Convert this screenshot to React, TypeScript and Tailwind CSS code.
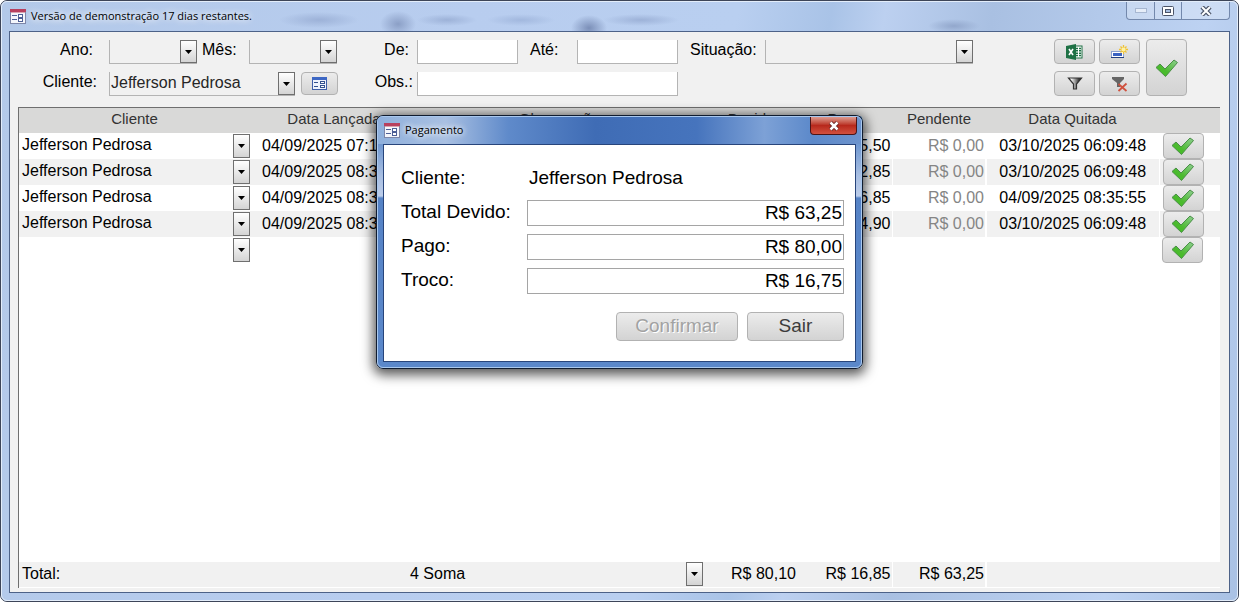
import React, { useState } from 'react';

const rows = [
  { client: 'Jefferson Pedrosa', date: '04/09/2025 07:15:22', amount: 'R$ 45,50', pending: 'R$ 0,00', settled: '03/10/2025 06:09:48' },
  { client: 'Jefferson Pedrosa', date: '04/09/2025 08:31:10', amount: 'R$ 12,85', pending: 'R$ 0,00', settled: '03/10/2025 06:09:48' },
  { client: 'Jefferson Pedrosa', date: '04/09/2025 08:35:02', amount: 'R$ 16,85', pending: 'R$ 0,00', settled: '04/09/2025 08:35:55' },
  { client: 'Jefferson Pedrosa', date: '04/09/2025 08:36:40', amount: 'R$ 4,90', pending: 'R$ 0,00', settled: '03/10/2025 06:09:48' },
];

const buttonStyle = 'flex items-center justify-center rounded-[4px] border border-[#b2b2b2] bg-linear-to-b from-[#ececec] to-[#d3d3d3]';

function FormIcon() {
  return (
    <svg width="16" height="15" viewBox="0 0 16 15" shapeRendering="crispEdges" aria-hidden="true">
      <rect x="0.5" y="0.5" width="15" height="14" fill="#f4f6fb" stroke="#7d86a8" />
      <rect width="16" height="3" fill="#b8405e" />
      <rect x="1" y="3" width="14" height="1" fill="#d9a3b0" />
      <path d="M2 6.5h5M2 10.5h5" stroke="#4d5f96" />
      <rect x="8.5" y="5.5" width="4" height="3" fill="#fff" stroke="#4d5f96" />
      <rect x="8.5" y="9.5" width="4" height="3" fill="#fff" stroke="#4d5f96" />
    </svg>
  );
}

function BlueFormIcon() {
  return (
    <svg width="15" height="13" viewBox="0 0 15 13" shapeRendering="crispEdges" aria-hidden="true">
      <rect x="0.5" y="0.5" width="14" height="12" fill="#eef3fd" stroke="#3f5fa8" />
      <rect width="15" height="3" fill="#3d67c4" />
      <path d="M2 5.5h4M2 9.5h4" stroke="#34528f" />
      <rect x="8.5" y="4.5" width="4" height="2" fill="#fff" stroke="#34528f" />
      <rect x="8.5" y="8.5" width="4" height="2" fill="#fff" stroke="#34528f" />
    </svg>
  );
}

function CheckIcon() {
  return (
    <svg width="24" height="20" viewBox="0 0 24 20" aria-hidden="true">
      <defs>
        <linearGradient id="check" x1="0" y1="1" x2="1" y2="0">
          <stop offset="0" stopColor="#3fc01f" />
          <stop offset="0.4" stopColor="#4cba2f" />
          <stop offset="1" stopColor="#8fcf92" />
        </linearGradient>
      </defs>
      <path d="M1 9.5 5 6l5 5L19 2l3.500 2.500L10.500 18.500Z" fill="url(#check)" stroke="#4a8f47" strokeLinejoin="round" />
    </svg>
  );
}

function ExcelIcon() {
  return (
    <svg width="17" height="16" viewBox="0 0 17 16" aria-hidden="true">
      <rect x="9" y="2" width="7" height="12" fill="#fff" stroke="#1e7145" />
      <path d="M10 4.5h2M13 4.5h2M10 6.8h2M13 6.8h2M10 9.2h2M13 9.2h2M10 11.5h2M13 11.5h2" stroke="#1e7145" strokeWidth="1.4" />
      <path d="M0 2 10 0v16L0 14Z" fill="#1e7145" />
      <path d="m3 5 4 6M7 5l-4 6" stroke="#fff" strokeWidth="1.6" />
    </svg>
  );
}

function NewRecordIcon() {
  return (
    <svg width="17" height="14" viewBox="0 0 17 14" aria-hidden="true">
      <rect x="0.5" y="6.5" width="12" height="6" fill="#fff" stroke="#8ba0cf" />
      <rect x="2" y="8" width="9" height="3" fill="#3b62c2" />
      <path d="M0 12.5h13" stroke="#24407f" />
      <path d="M12.5 0v9M8 4.5h9M9.5 1.5l6 6M15.5 1.5l-6 6" stroke="#f0c233" strokeWidth="1.3" />
      <circle cx="12.5" cy="4.5" r="2" fill="#fff3a3" />
    </svg>
  );
}

function FilterIcon() {
  return (
    <svg width="16" height="13" viewBox="0 0 16 13" aria-hidden="true">
      <defs>
        <linearGradient id="funnel">
          <stop offset="0.2" stopColor="#fff" />
          <stop offset="0.8" stopColor="#3a3a3a" />
        </linearGradient>
      </defs>
      <path d="M1.5 1h13L9.5 7v5h-3V7Z" fill="url(#funnel)" stroke="#333" strokeWidth="1.2" />
    </svg>
  );
}

function ClearFilterIcon() {
  return (
    <svg width="16" height="16" viewBox="0 0 16 16" aria-hidden="true">
      <path d="M0 1h12v2L8 7v4H5V7L0 3Z" fill="#666" />
      <path d="m6.5 8 8 7M14.5 7.5l-8 7.5" stroke="#d0523f" strokeWidth="1.8" />
    </svg>
  );
}

function Arrow({ className }: { className: string }) {
  return (
    <span className={`pointer-events-none col-start-1 row-start-1 flex w-[17px] items-center justify-center justify-self-end border border-[#6f6f6f] bg-linear-to-b from-white to-[#d4d4d4] ${className}`}>
      <svg width="7" height="4" viewBox="0 0 7 4" aria-hidden="true">
        <path d="M0 0h7L3.5 4Z" fill="#000" />
      </svg>
    </span>
  );
}

function Combo({ id, className, options = [] }: { id: string; className: string; options?: string[] }) {
  return (
    <div className={`grid h-6 shrink-0 border-b border-l border-[#b4b4b4] ${className}`}>
      <select id={id} className="col-start-1 row-start-1 w-full appearance-none bg-transparent pb-0.5 pl-px text-[#262626] outline-none">
        {options.map((o) => (
          <option key={o}>{o}</option>
        ))}
      </select>
      <Arrow className="h-[23px]" />
    </div>
  );
}

function TextField({ id, className }: { id: string; className: string }) {
  return <input id={id} type="text" className={`h-6 shrink-0 border-x border-b border-[#b4b4b4] bg-white px-1 outline-none ${className}`} />;
}

function Columns() {
  return (
    <colgroup>
      <col className="w-[231px]" />
      <col className="w-[160px]" />
      <col />
      <col className="w-[94px]" />
      <col className="w-[94px]" />
      <col className="w-[94px]" />
      <col className="w-[173px]" />
      <col className="w-[61px]" />
    </colgroup>
  );
}

function PaymentDialog({ onClose }: { onClose: () => void }) {
  const fields = [
    { id: 'total', label: 'Total Devido:', value: 'R$ 63,25' },
    { id: 'pago', label: 'Pago:', value: 'R$ 80,00' },
    { id: 'troco', label: 'Troco:', value: 'R$ 16,75' },
  ];

  return (
    <div
      role="dialog"
      aria-label="Pagamento"
      className="absolute inset-x-0 top-[114px] mx-auto w-[487px] rounded-[7px] border border-[#101c30] bg-[linear-gradient(180deg,#7b9fd4_0px,#6f97d0_28px,#a9bfe2_60px,#bccdea_80px,#5683c6_82px,#5b88ca_100%)] shadow-[0_3px_12px_3px_rgba(0,0,0,0.65)]"
    >
      <div className="rounded-[6px] border border-[#a9c8ee] px-[5px] pb-[5px]">
        <div className="-mx-[5px] flex h-[27px] items-start justify-between rounded-t-[5px] bg-[linear-gradient(90deg,#8fb0dc_0%,#a9c0e2_14%,#5f8aca_27%,#3f6cb5_45%,#4674bd_66%,#7da1d6_80%,#5c89ca_90%,#6d93cc_100%)] pl-1.5 pr-1">
          <div className="flex items-center gap-[5px] pt-[5px]">
            <FormIcon />
            <h2 className="font-['Open_Sans',sans-serif] text-[11px] leading-4 text-black [text-shadow:0_0_6px_white,0_0_6px_white]">Pagamento</h2>
          </div>
          <button
            type="button"
            aria-label="Fechar"
            onClick={onClose}
            className="flex h-[18px] w-[47px] items-center justify-center rounded-b-[4px] border border-t-0 border-[#4b1416] bg-linear-to-b from-[#dc9a90] via-[#b7281c] via-50% to-[#d2503e]"
          >
            <svg width="12" height="10" viewBox="0 0 12 10" aria-hidden="true">
              <path d="m2.5 1.5 7 7M9.5 1.5l-7 7" stroke="#5b2020" strokeWidth="4" />
              <path d="m2.5 1.5 7 7M9.5 1.5l-7 7" stroke="#fff" strokeWidth="2.5" />
            </svg>
          </button>
        </div>
        <form className="border border-[#28457b] bg-white pb-5 pl-[17px] pr-[11px] pt-[21px] text-[19px] text-black" onSubmit={(e) => e.preventDefault()}>
          <div className="flex flex-col gap-2">
            <div className="flex h-[26px] items-start leading-6">
              <span className="w-[126px]">Cliente:</span>
              <span className="pl-0.5">Jefferson Pedrosa</span>
            </div>
            {fields.map((f) => (
              <div key={f.id} className="flex h-[26px] items-start">
                <label htmlFor={f.id} className="w-[126px] shrink-0 leading-6">{f.label}</label>
                <input id={f.id} type="text" defaultValue={f.value} className="h-[26px] min-w-0 flex-1 border border-[#a5a5a5] bg-white px-px text-right outline-none" />
              </div>
            ))}
          </div>
          <div className="mt-[18px] flex justify-end gap-[9px]">
            <button type="button" disabled className={`h-[29px] w-[122px] text-[#a2a2a2] [text-shadow:1px_1px_0_white] ${buttonStyle}`}>Confirmar</button>
            <button type="button" onClick={onClose} className={`h-[29px] w-[97px] text-[#3c3c3c] ${buttonStyle}`}>Sair</button>
          </div>
        </form>
      </div>
    </div>
  );
}

export default function App() {
  const [isOpen, setIsOpen] = useState(true);

  return (
    <div className="relative flex min-h-screen flex-col rounded-[7px] border border-[#3d4558] bg-[linear-gradient(100deg,#b3c9e9_0%,#b8cdef_35%,#b9cff0_55%,#a9c3e7_62%,#bcd0f0_66%,#a9c0e2_74%,#bdd2f2_90%,#a9c1e4_100%)] font-['Liberation_Sans',Arial,sans-serif] text-[16px] text-black">
      <div className="flex flex-1 flex-col rounded-[6px] border border-[#e3edfa] px-[7px] pb-[7px]">
        <header className="flex h-[29px] items-start justify-between bg-[radial-gradient(ellipse_40px_8px_at_310px_18px,#9db2d8_0%,transparent_100%),radial-gradient(ellipse_18px_13px_at_389px_22px,#8b9fc6_0%,transparent_100%),radial-gradient(ellipse_30px_6px_at_438px_18px,#9db2d8_0%,transparent_100%),radial-gradient(ellipse_34px_6px_at_512px_18px,#a2b8de_0%,transparent_100%),radial-gradient(ellipse_18px_13px_at_580px_26px,#7b8fb8_0%,transparent_100%),radial-gradient(ellipse_38px_6px_at_632px_18px,#9db2d8_0%,transparent_100%),radial-gradient(ellipse_26px_7px_at_945px_24px,#92a7cc_0%,transparent_100%)] pl-px">
          <div className="flex items-center gap-[5px] pt-1.5">
            <FormIcon />
            <h1 className="font-['Open_Sans',sans-serif] text-[11px] leading-4 [text-shadow:0_0_6px_white,0_0_8px_white]">Versão de demonstração 17 dias restantes.</h1>
          </div>
          <div className="flex h-[18px] overflow-hidden rounded-b-[4px] border border-t-0 border-[#7388ac] bg-white/25">
            <button type="button" aria-label="Minimizar" className="flex w-7 items-center justify-center border-r border-[#7388ac]">
              <svg width="12" height="5" viewBox="0 0 12 5" aria-hidden="true"><rect x="0.5" y="0.5" width="11" height="4" fill="#e6edf8" stroke="#a7b7d1" /></svg>
            </button>
            <button type="button" aria-label="Maximizar" className="flex w-[27px] items-center justify-center border-r border-[#7388ac]">
              <svg width="12" height="10" viewBox="0 0 12 10" aria-hidden="true">
                <rect x="0.5" y="0.5" width="11" height="9" rx="1" fill="#fff" stroke="#4b5468" />
                <rect x="3.5" y="3.5" width="5" height="3" fill="#a6bddf" stroke="#4b5468" />
              </svg>
            </button>
            <button type="button" aria-label="Fechar janela" className="flex w-[47px] items-center justify-center">
              <svg width="12" height="10" viewBox="0 0 12 10" aria-hidden="true">
                <path d="m2 1 8 8M10 1 2 9" stroke="#4b5468" strokeWidth="4.4" />
                <path d="m2 1 8 8M10 1 2 9" stroke="#fff" strokeWidth="2" />
              </svg>
            </button>
          </div>
        </header>

        <main className="flex flex-1 flex-col border border-[#4d6288] bg-[#f1f1f1] pb-1 pt-[7px]">
          <div className="flex items-start justify-between pr-[42px]">
            <div className="flex flex-col gap-2 pt-px leading-5">
              <div className="flex items-start">
                <label htmlFor="ano" className="w-[99px] pr-4 text-right">Ano:</label>
                <Combo id="ano" className="w-[88px]" />
                <label htmlFor="mes" className="w-[52px] pl-[5px]">Mês:</label>
                <Combo id="mes" className="w-[88px]" />
                <label htmlFor="de" className="w-[80px] pr-2 text-right">De:</label>
                <TextField id="de" className="w-[101px]" />
                <label htmlFor="ate" className="w-[59px] pl-3">Até:</label>
                <TextField id="ate" className="w-[101px]" />
                <label htmlFor="situacao" className="w-[87px] pl-3">Situação:</label>
                <Combo id="situacao" className="w-[208px]" />
              </div>
              <div className="flex items-start">
                <label htmlFor="cliente" className="w-[99px] pr-3 text-right">Cliente:</label>
                <Combo id="cliente" className="w-[186px]" options={['Jefferson Pedrosa']} />
                <button type="button" aria-label="Abrir cliente" className={`ml-1.5 h-[23px] w-[37px] ${buttonStyle}`}><BlueFormIcon /></button>
                <label htmlFor="obs" className="w-[79px] pr-1 text-right">Obs.:</label>
                <TextField id="obs" className="w-[261px]" />
              </div>
            </div>
            <div className="flex gap-1.5">
              <div className="grid grid-cols-2 gap-x-1 gap-y-[7px]">
                <button type="button" aria-label="Exportar para Excel" className={`h-[25px] w-[41px] ${buttonStyle}`}><ExcelIcon /></button>
                <button type="button" aria-label="Novo registro" className={`h-[25px] w-[41px] ${buttonStyle}`}><NewRecordIcon /></button>
                <button type="button" aria-label="Filtrar" className={`h-[25px] w-[41px] ${buttonStyle}`}><FilterIcon /></button>
                <button type="button" aria-label="Limpar filtro" className={`h-[25px] w-[41px] ${buttonStyle}`}><ClearFilterIcon /></button>
              </div>
              <button type="button" aria-label="Quitar" onClick={() => setIsOpen(true)} className={`w-[41px] ${buttonStyle}`}><CheckIcon /></button>
            </div>
          </div>

          <div className="ml-2 mr-[9px] mt-[11px] flex flex-1 flex-col justify-between border-l border-t border-[#6f6f6f] bg-white">
            <table className="w-full table-fixed border-collapse">
              <Columns />
              <thead>
                <tr className="h-[25px] bg-[#d9d9d8] text-[15px] leading-[22px] text-[#333]">
                  <th className="p-0 pb-[3px] font-normal">Cliente</th>
                  <th className="p-0 pb-[3px] pl-2 font-normal">Data Lançada</th>
                  <th className="p-0 pb-[3px] pl-3 font-normal">Observações</th>
                  <th className="p-0 pb-[3px] font-normal">Devido</th>
                  <th className="p-0 pb-[3px] font-normal">Pago</th>
                  <th className="p-0 pb-[3px] font-normal">Pendente</th>
                  <th className="p-0 pb-[3px] font-normal">Data Quitada</th>
                  <th className="p-0" />
                </tr>
              </thead>
              <tbody className="leading-6">
                {rows.map((r, i) => (
                  <tr key={i} className="h-[26px] bg-white even:bg-[#f1f1f1]">
                    <td className="p-0">
                      <div className="flex h-[26px] items-start justify-between pl-[3px]">
                        {r.client}
                        <Arrow className="my-px h-6" />
                      </div>
                    </td>
                    <td className="p-0 pl-3">{r.date}</td>
                    <td className="p-0" />
                    <td className="p-0 pr-0.5 text-right">{r.amount}</td>
                    <td className="border-r border-white p-0 pr-px text-right">{r.amount}</td>
                    <td className="border-r-2 border-white p-0 pr-px text-right text-[#858585]">{r.pending}</td>
                    <td className="border-r border-white p-0 text-center">{r.settled}</td>
                    <td className="p-0 pl-[3px]">
                      <button type="button" aria-label="Quitar lançamento" className={`h-[26px] w-[41px] ${buttonStyle}`}><CheckIcon /></button>
                    </td>
                  </tr>
                ))}
                <tr className="h-[26px]">
                  <td className="p-0"><div className="flex justify-end"><Arrow className="my-px h-6" /></div></td>
                  <td colSpan={6} />
                  <td className="p-0 pl-[3px]">
                    <button type="button" aria-label="Quitar lançamento" className={`h-[26px] w-[41px] ${buttonStyle}`}><CheckIcon /></button>
                  </td>
                </tr>
              </tbody>
            </table>
            <table className="w-full table-fixed border-collapse border-b border-white leading-6">
              <Columns />
              <tbody>
                <tr className="h-[26px] bg-[#f1f1f1]">
                  <td className="p-0 pl-[3px]">Total:</td>
                  <td />
                  <td className="p-0">
                    <div className="flex items-start justify-between">4 Soma <Arrow className="mr-px h-6" /></div>
                  </td>
                  <td className="p-0 pr-0.5 text-right">R$ 80,10</td>
                  <td className="border-r border-white p-0 pr-px text-right">R$ 16,85</td>
                  <td className="border-r-2 border-white p-0 pr-px text-right">R$ 63,25</td>
                  <td />
                  <td />
                </tr>
              </tbody>
            </table>
          </div>
        </main>
      </div>
      {isOpen && <PaymentDialog onClose={() => setIsOpen(false)} />}
    </div>
  );
}
